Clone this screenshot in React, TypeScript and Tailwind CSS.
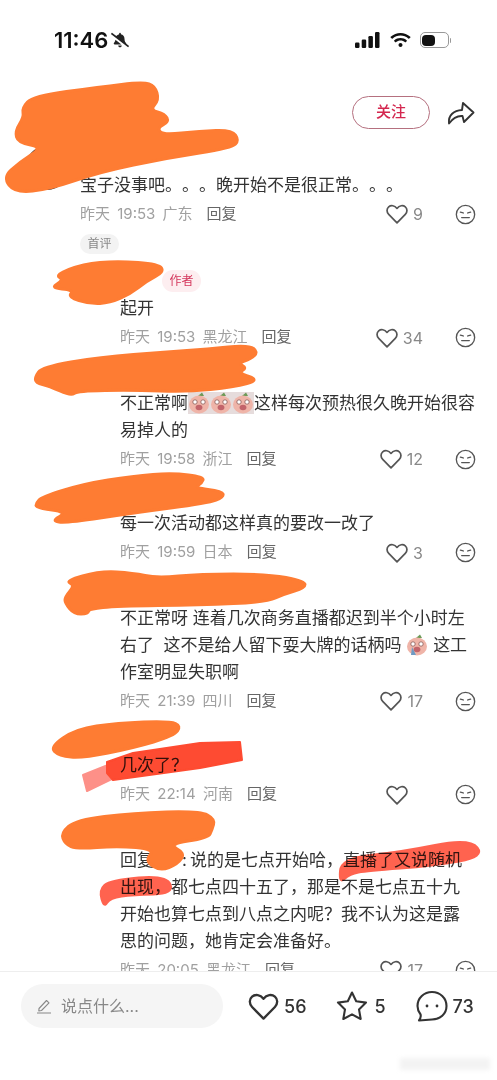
import { ReactNode } from 'react';
import { FaBellSlash, FaWifi } from 'react-icons/fa';

const HEART = 'M12 20.8 L3.7 12.4 C1.5 10.1 1.5 6.7 3.7 4.8 C6 2.9 9.6 3.3 12 6.4 C14.4 3.3 18 2.9 20.3 4.8 C22.5 6.7 22.5 10.1 20.3 12.4 Z';

function Heart({ className }: { className: string }) {
  return (
    <svg viewBox="0 0 24 24" fill="none" stroke="currentColor" strokeWidth="1.7" strokeLinejoin="round" className={className}>
      <path d={HEART} />
    </svg>
  );
}

function Face() {
  return (
    <svg viewBox="0 0 22 22" fill="none" stroke="#555" strokeWidth="1.4" strokeLinecap="round" className="w-[21px] h-[21px]">
      <circle cx="11" cy="11" r="9.6" />
      <path d="M5.6 8.6 L8.6 9.4 M16.4 8.6 L13.4 9.4 M7 14.2 L15 14.2" />
    </svg>
  );
}

// sticker used inside comment text
function Sticker({ tinted }: { tinted?: boolean }) {
  return (
    <span className={`inline-block w-[22px] h-[22px] align-[-5px] ${tinted ? 'bg-[#e6dcdc]' : ''}`}>
      <svg viewBox="0 0 22 22" className="w-full h-full">
        <path d="M10 4 L14 0.5 L16 4 Z" fill="#6d9a58" />
        <ellipse cx="11" cy="12.5" rx="10" ry="9" fill="#efb4a8" />
        <circle cx="7" cy="10" r="2.2" fill="#fff" stroke="#8a5a55" strokeWidth="0.8" />
        <circle cx="15" cy="10" r="2.2" fill="#fff" stroke="#8a5a55" strokeWidth="0.8" />
        <ellipse cx="11" cy="15.5" rx="3.4" ry="2.8" fill="#c2646a" />
        {tinted ? null : <path d="M6 13 L5 21 L10 21 Z" fill="#6f9bc4" />}
      </svg>
    </span>
  );
}

type MetaProps = { time: string; place: string; likes?: string };

function Meta({ time, place, likes }: MetaProps) {
  return (
    <div className="mt-[1.5px] h-[28px] flex items-center text-[15px] text-[#a0a0a0]">
      <span className="[word-spacing:3px]">昨天 {time} {place}</span>
      <span className="ml-[14px] text-[#666]">回复</span>
      <div className="ml-auto flex items-center text-[#888]">
        <Heart className="w-[24px] h-[24px] text-[#555]" />
        <span className="ml-[4px] min-w-[10px] text-right text-[16px]">{likes}</span>
        <div className="ml-[32px]">
          <Face />
        </div>
      </div>
    </div>
  );
}

function Reply({ top, children, meta }: { top: string; children: ReactNode; meta: MetaProps }) {
  return (
    <div className={`pl-[120px] pr-[21px] ${top}`}>
      <div className="text-[17px] leading-[27px] text-[#333]">{children}</div>
      <Meta {...meta} />
    </div>
  );
}

// rounds a hand-traced outline through the midpoints of its corners
function smooth(pts: number[][]) {
  const mid = (a: number[], b: number[]) => `${(a[0] + b[0]) / 2} ${(a[1] + b[1]) / 2}`;
  let d = `M${mid(pts[pts.length - 1], pts[0])}`;
  pts.forEach((p, i) => {
    d += ` Q${p[0]} ${p[1]} ${mid(p, pts[(i + 1) % pts.length])}`;
  });
  return d + ' Z';
}

const ORANGE = [
  [[22, 108], [33, 96], [100, 87], [143, 82], [155, 86], [159, 100], [150, 110], [165, 114], [169, 122], [157, 128], [163, 135], [200, 131], [232, 130], [239, 140], [232, 148], [167, 158], [100, 172], [50, 189], [15, 193], [3, 177], [20, 162], [43, 147], [18, 143], [15, 131], [24, 117]],
  [[55, 275], [83, 264], [117, 261], [159, 264], [164, 272], [147, 281], [130, 294], [110, 303], [90, 304], [68, 297], [74, 290], [50, 288], [64, 280]],
  [[35, 377], [42, 367], [100, 357], [167, 352], [207, 349], [249, 345], [258, 352], [251, 359], [238, 363], [247, 368], [238, 373], [260, 380], [234, 387], [187, 392], [133, 390], [77, 391], [71, 396], [49, 386], [36, 383]],
  [[36, 503], [42, 497], [83, 484], [133, 476], [173, 473], [204, 477], [202, 483], [194, 488], [222, 491], [224, 497], [208, 503], [133, 513], [67, 523], [51, 521], [68, 512], [36, 508]],
  [[65, 581], [100, 571], [133, 573], [157, 578], [200, 574], [267, 574], [305, 581], [305, 588], [284, 594], [267, 602], [200, 605], [117, 606], [89, 609], [88, 614], [74, 614], [65, 603], [65, 597], [75, 585]],
  [[50, 747], [76, 729], [117, 723], [170, 721], [181, 726], [174, 736], [133, 748], [83, 758], [59, 756]],
  [[61, 833], [76, 820], [133, 813], [200, 811], [215, 819], [212, 830], [208, 838], [168, 844], [185, 853], [178, 864], [160, 871], [145, 861], [155, 849], [117, 846], [77, 849], [65, 844]],
];

function Scribbles() {
  return (
    <svg viewBox="0 0 497 1080" className="absolute inset-0 w-[497px] h-[1080px] pointer-events-none">
      <defs>
        <filter id="soft"><feGaussianBlur stdDeviation="0.6" /></filter>
      </defs>
      <g fill="#fe7c33" stroke="#fe7c33" strokeWidth="3" strokeLinejoin="round">
        {ORANGE.map((pts, i) => (
          <path key={i} d={smooth(pts)} />
        ))}
      </g>
      <g className="mix-blend-multiply" filter="url(#soft)" strokeWidth="2" strokeLinejoin="round">
        <path d="M83 775 L108 765 L120 775 L87 791 Z" fill="#fd9088" stroke="#fd9088" />
        <path d="M107 762 L133 753 L200 743 L240 742 L242 760 L200 768 L113 780 L107 773 Z" fill="#fe4b30" stroke="#fe4b30" />
        <path d={smooth([[339, 884], [341, 858], [400, 852], [470, 838], [485, 857], [433, 866], [367, 871], [350, 874]])} fill="#ff6350" stroke="#ff6350" />
        <path d={smooth([[99, 890], [110, 880], [167, 875], [174, 894], [133, 895], [110, 898], [104, 908]])} fill="#ff6350" stroke="#ff6350" />
      </g>
    </svg>
  );
}

export default function App() {
  return (
    <div className="relative w-full h-[1080px] overflow-hidden bg-white flex flex-col font-['Inter','Noto_Sans_CJK_SC',sans-serif] [text-spacing-trim:space-all]">
      {/* Comments */}
      <div className="h-[971px] flex-none overflow-hidden">
        {/* Status bar */}
        <div className="h-[80px] flex items-center pl-[54px] pr-[46px] text-[#111]">
          <span className="text-[22px] font-semibold leading-none">11:46</span>
          <FaBellSlash className="ml-[3px] w-[18px] h-[16px] text-[#222]" />
          <div className="ml-auto flex items-center">
            <svg viewBox="0 0 25 16" className="w-[25px] h-[16px]" fill="#111">
              <rect x="0" y="10.5" width="4.5" height="5.5" rx="1.2" />
              <rect x="6.7" y="7.5" width="4.5" height="8.5" rx="1.2" />
              <rect x="13.4" y="4" width="4.5" height="12" rx="1.2" />
              <rect x="20" y="0" width="4.5" height="16" rx="1.2" />
            </svg>
            <FaWifi className="ml-[10px] w-[21px] h-[16px]" />
            <div className="ml-[9px] w-[29px] h-[16px] rounded-[5px] border border-[#999] p-[1.5px]">
              <div className="w-[13px] h-full rounded-[4px] bg-[#111]" />
            </div>
            <div className="ml-[1px] w-[1.5px] h-[5px] bg-[#999] rounded-r" />
          </div>
        </div>

        {/* Header actions */}
        <div className="mt-[16px] h-[33px] flex items-center justify-end pr-[22px]">
          <button className="w-[78px] h-[33px] rounded-full border border-[#b5707f] text-[15px] font-medium text-[#d4274f]">关注</button>
          <svg viewBox="0 0 28 24" fill="none" stroke="#333" strokeWidth="1.9" strokeLinejoin="round" className="ml-[17px] w-[28px] h-[24px]">
            <path d="M2 22.5 C1 14 7 9.5 15 9 L16 2 L26.5 11.5 L17 21 L15.5 15 C10 14.5 6 17 2 22.5 Z" />
          </svg>
        </div>

        {/* First comment */}
        <div className="mt-[17px] flex pl-[25px] pr-[21px]">
          <div className="w-[44px] h-[44px] rounded-full border-2 border-[#222] flex-none" />
          <div className="ml-[11px] flex-1">
            <div className="mt-[25.5px] text-[17px] leading-[27px] text-[#333]">宝子没事吧。。。晚开始不是很正常。。。</div>
            <Meta time="19:53" place="广东" likes="9" />
            <div className="mt-[5.5px] w-[39px] h-[20px] rounded-full bg-[#f3f3f3] flex items-center justify-center text-[12px] text-[#888]">首评</div>
          </div>
        </div>

        <div className="mt-[16px] h-[22px] pl-[162px] flex items-start">
          <span className="w-[39px] h-[22px] rounded-full bg-[#fdeef0] flex items-center justify-center text-[12px] text-[#d4375c]">作者</span>
        </div>
        <Reply top="mt-[3.5px]" meta={{ time: '19:53', place: '黑龙江', likes: '34' }}>起开</Reply>
        <Reply top="mt-[38px]" meta={{ time: '19:58', place: '浙江', likes: '12' }}>
          不正常啊<Sticker tinted /><Sticker tinted /><Sticker tinted />这样每次预热很久晚开始很容易掉人的
        </Reply>
        <Reply top="mt-[37px]" meta={{ time: '19:59', place: '日本', likes: '3' }}>每一次活动都这样真的要改一改了</Reply>
        <Reply top="mt-[38px]" meta={{ time: '21:39', place: '四川', likes: '17' }}>
          不正常呀 连着几次商务直播都迟到半个小时左右了&nbsp; 这不是给人留下耍大牌的话柄吗 <Sticker /> 这工作室明显失职啊
        </Reply>
        <Reply top="mt-[37px]" meta={{ time: '22:14', place: '河南' }}>几次了？</Reply>
        <Reply top="mt-[38px]" meta={{ time: '20:05', place: '黑龙江', likes: '17' }}>
          回复<span className="inline-block w-[28px]" />:<span className="inline-block w-[3px]" />说的是七点开始哈，直播了又说随机出现，都七点四十五了，那是不是七点五十九开始也算七点到八点之内呢？我不认为这是露思的问题，她肯定会准备好。
        </Reply>
      </div>

      {/* Bottom bar */}
      <div className="border-t border-[#eeeeee] pt-[12px] pl-[21px] flex text-[#333]">
        <div className="w-[202px] h-[44px] rounded-full bg-[#f5f5f5] flex items-center pl-[15px] text-[16px] text-[#888]">
          <svg viewBox="0 0 16 16" fill="none" stroke="#888" strokeWidth="1.1" strokeLinejoin="round" className="w-[16px] h-[16px]">
            <path d="M3 10.5 L10.5 2.5 L13 4.8 L5.5 12.5 L2.8 13 Z M1 15 L15 15" />
          </svg>
          <span className="ml-[9px]">说点什么...</span>
        </div>
        <div className="ml-[24px] h-[44px] flex items-center">
          <Heart className="w-[33px] h-[33px] text-[#333]" />
          <span className="ml-[4px] text-[18px] font-medium">56</span>
        </div>
        <div className="ml-[30px] h-[44px] flex items-center">
          <svg viewBox="0 0 32 32" fill="none" stroke="#333" strokeWidth="2.1" strokeLinejoin="round" className="w-[32px] h-[32px]">
            <path d="M16 2.5 L20.2 11.2 L30 12.6 L23 19.4 L24.7 29 L16 24.4 L7.3 29 L9 19.4 L2 12.6 L11.8 11.2 Z" />
          </svg>
          <span className="ml-[6px] text-[18px] font-medium">5</span>
        </div>
        <div className="ml-[30px] h-[44px] flex items-center">
          <svg viewBox="0 0 32 32" fill="none" stroke="#333" strokeWidth="2.1" strokeLinejoin="round" className="w-[32px] h-[32px]">
            <path d="M16 2 C24 2 30.5 8 30.5 16 C30.5 24 24 29.5 16 29.5 L3 30.5 C4.5 28.5 5 26.5 4.6 24.5 C2.6 22 1.5 19 1.5 16 C1.5 8 8 2 16 2 Z" />
            <circle cx="11" cy="16" r="1.4" fill="#333" stroke="none" />
            <circle cx="21" cy="16" r="1.4" fill="#333" stroke="none" />
          </svg>
          <span className="ml-[5px] text-[18px] font-medium">73</span>
        </div>
      </div>

      {/* Painted-over names and marks */}
      <Scribbles />

      {/* Faint watermark */}
      <div className="absolute left-[400px] top-[1058px] w-[90px] h-[12px] bg-[#f3f3f3] blur-[2px]" />
    </div>
  );
}
